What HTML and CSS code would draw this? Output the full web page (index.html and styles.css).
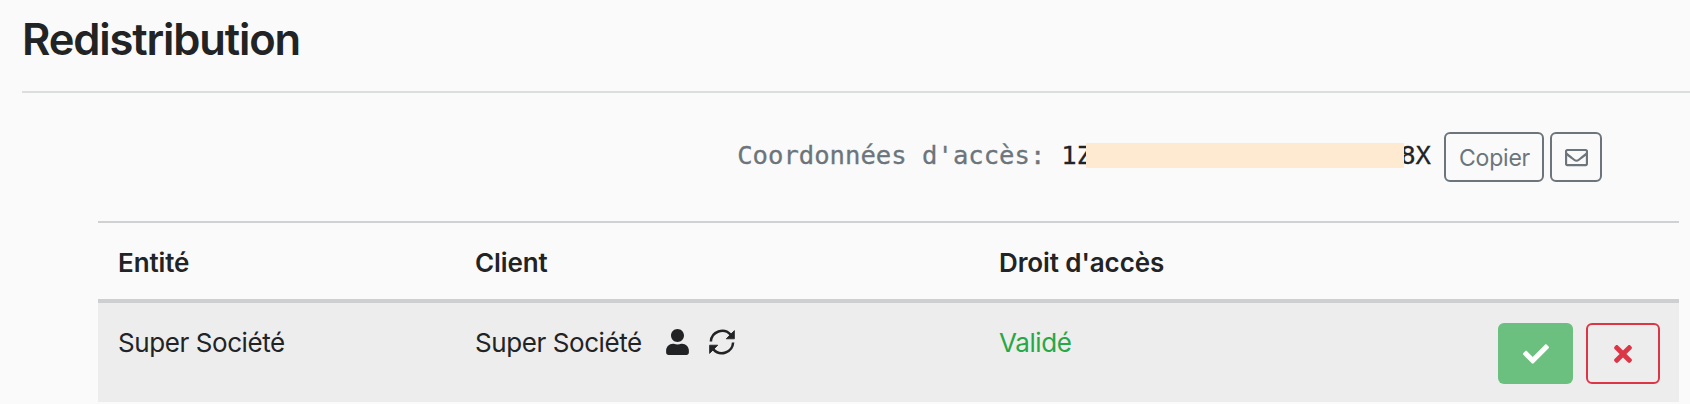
FILE: index.html
```
<!DOCTYPE html>
<html lang="fr">
<head>
<meta charset="utf-8">
<title>Redistribution</title>
<link rel="stylesheet" href="styles.css">
</head>
<body>
<h1 class="title"><span>Redistribution</span></h1>
<div class="access">
  <span class="access-label">Coordonnées d'accès:</span>
  <span class="access-code"><span>1Z</span><span class="mask"></span><span>8X</span></span>
  <button class="btn btn-copy"><span>Copier</span></button>
  <button class="btn btn-mail" aria-label="Mail">
    <svg viewBox="0 0 512 512" width="23" height="23" fill="currentColor"><path d="M464 64H48C21.5 64 0 85.500 0 112v288c0 26.500 21.500 48 48 48h416c26.500 0 48-21.500 48-48V112c0-26.500-21.500-48-48-48zm0 48v40.800c-22.400 18.300-58.200 46.700-134.600 106.500-16.800 13.200-50.200 45.100-73.400 44.700-23.200.4-56.600-31.500-73.400-44.700C106.200 199.500 70.400 171.100 48 152.800V112h416zM48 400V214.400c22.900 18.300 55.400 43.900 105 82.600 21.900 17.200 60.300 55.200 103 55 42.500.2 80.500-37.200 103-54.900 49.600-38.800 82.100-64.400 105-82.700V400H48z"/></svg>
  </button>
</div>
<table class="table">
  <colgroup><col class="col-entity"><col class="col-client"><col class="col-right"><col class="col-actions"></colgroup>
  <thead>
    <tr><th>Entité</th><th>Client</th><th>Droit d'accès</th><th></th></tr>
  </thead>
  <tbody>
    <tr>
      <td><span class="name">Super Société</span></td>
      <td>
        <div class="client">
          <span class="name">Super Société</span>
          <svg class="icon-user" viewBox="0 0 448 512" width="23" height="26" fill="currentColor"><path d="M224 256c70.700 0 128-57.300 128-128S294.700 0 224 0 96 57.300 96 128s57.300 128 128 128zm89.600 32h-16.700c-22.200 10.200-46.900 16-72.900 16s-50.600-5.800-72.900-16h-16.700C60.200 288 0 348.200 0 422.400V464c0 26.500 21.500 48 48 48h352c26.500 0 48-21.500 48-48v-41.600c0-74.200-60.200-134.400-134.400-134.400z"/></svg>
          <svg class="icon-sync" viewBox="0 0 26 26" width="26" height="26"><g fill="none" stroke="currentColor" stroke-width="2.500"><path d="M1.900 12.500A11.300 11.300 0 0 1 21.600 5.600"/><path d="M24.100 13.500A11.300 11.300 0 0 1 4.400 20.400"/></g><path fill="currentColor" d="M25.400 1.600V9.800H17.200zM.6 24.400V16.200H8.800z" stroke="currentColor" stroke-width=".8" stroke-linejoin="round"/></svg>
        </div>
      </td>
      <td><span class="valid">Validé</span></td>
      <td>
        <div class="actions">
          <button class="act act-ok" aria-label="Valider"><svg viewBox="0 0 512 512" width="26" height="26" fill="currentColor"><path d="M173.900 439.400L7.500 273c-10-10-10-26.200 0-36.200l36.200-36.200c10-10 26.200-10 36.200 0L192 312.700 432.100 72.600c10-10 26.200-10 36.200 0l36.200 36.200c10 10 10 26.200 0 36.200L210.100 439.400c-10 10-26.200 10-36.200 0z"/></svg></button>
          <button class="act act-no" aria-label="Refuser"><svg viewBox="0 0 352 512" width="18" height="26" fill="currentColor"><path d="M242.700 256l100.100-100.100c12.300-12.300 12.300-32.200 0-44.500l-22.200-22.200c-12.300-12.300-32.200-12.300-44.500 0L176 189.300 75.900 89.200c-12.300-12.300-32.200-12.300-44.500 0L9.200 111.400c-12.300 12.300-12.300 32.200 0 44.500L109.300 256 9.200 356.100c-12.300 12.300-12.300 32.200 0 44.500l22.200 22.200c12.300 12.300 32.200 12.300 44.500 0L176 322.700l100.100 100.100c12.300 12.300 32.200 12.300 44.500 0l22.200-22.200c12.300-12.300 12.300-32.200 0-44.500L242.700 256z"/></svg></button>
        </div>
      </td>
    </tr>
  </tbody>
</table>
</body>
</html>
```

FILE: styles.css
```
* { box-sizing: border-box; }

body {
  margin: 0;
  height: 404px;
  overflow: hidden;
  background: #fafafa;
  color: #212325;
  font-family: Inter, sans-serif;
  font-size: 26px;
  line-height: 39px;
}

.title {
  height: 93px;
  margin: 0 0 0 22px;
  padding-top: 13px;
  border-bottom: 2px solid #dcdddd;
  font-size: 43.5px;
  font-weight: 600;
  line-height: 52px;
  letter-spacing: -1.15px;
}

.access {
  display: flex;
  justify-content: flex-end;
  align-items: flex-start;
  height: 128px;
  padding: 39px 88px 0 0;
}

.access-label,
.access-code {
  margin-top: 4px;
  font-family: "DejaVu Sans Mono", monospace;
  font-size: 25.6px;
  line-height: 38px;
  white-space: pre;
  -webkit-text-stroke: .3px currentColor;
}

.access-label { color: #6c757b; margin-right: 16px; }

.access-code { display: flex; margin-right: 13px; }

/* Hides the middle of the access key */
.mask {
  position: relative;
  width: 318px;
  height: 25px;
  margin: 7px -4px 0 -6px;
  background: #fee9d1;
}

.btn {
  display: flex;
  align-items: center;
  justify-content: center;
  height: 50px;
  padding: 0;
  border: 2px solid #6c757b;
  border-radius: 6px;
  background: transparent;
  color: #6c757b;
  font: 400 23px/34px Inter, sans-serif;
}

.btn-copy { width: 100px; margin-right: 6px; padding: 1px 0 0 1px; letter-spacing: -.2px; }
.btn-mail { width: 52px; }

.table {
  width: 1581px;
  margin-left: 98px;
  border-collapse: separate;
  border-spacing: 0;
  table-layout: fixed;
}

.col-entity { width: 357px; }
.col-client { width: 524px; }
.col-right { width: 400px; }

.table th {
  height: 82px;
  padding: 20px 20px 17px;
  border-top: 2px solid #d0d1d2;
  border-bottom: 4px solid #cdcfd0;
  font-weight: 600;
  letter-spacing: -.1px;
  text-align: left;
  vertical-align: top;
}

.table td {
  height: 99px;
  padding: 20px 19px 18px 20px;
  background: #ededed;
  letter-spacing: -.42px;
  vertical-align: top;
}

.client { display: flex; align-items: flex-start; }
.icon-user { margin: 6px 0 0 24px; }
.icon-sync { margin: 6px 0 0 20px; }

.valid { color: #28a745; }

.actions { display: flex; justify-content: flex-end; gap: 13px; }

.act {
  display: flex;
  align-items: center;
  justify-content: center;
  height: 61px;
  padding: 0;
  border-radius: 6px;
}

.act-ok { width: 75px; border: 0; background: #6bc07f; color: #fff; }
.act-no { width: 74px; border: 2px solid #dc3545; background: transparent; color: #dc3545; }
```
